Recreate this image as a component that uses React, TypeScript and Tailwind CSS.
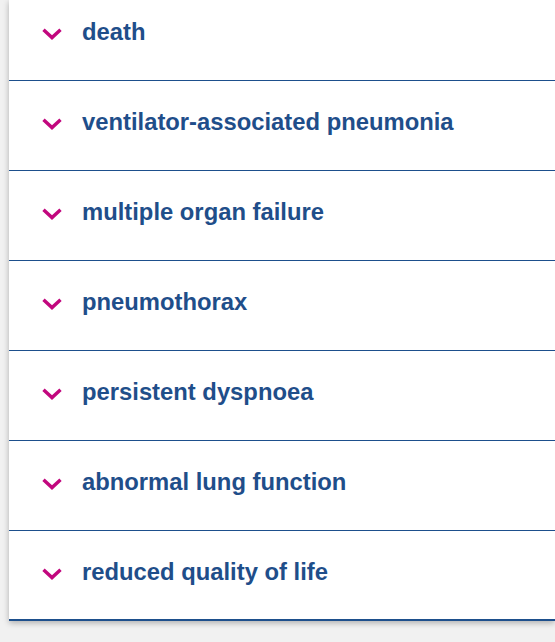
const outcomes = [
  'death',
  'ventilator-associated pneumonia',
  'multiple organ failure',
  'pneumothorax',
  'persistent dyspnoea',
  'abnormal lung function',
  'reduced quality of life',
];

const Chevron = () => (
  <svg width="20" height="12" viewBox="0 0 20 12" className="shrink-0">
    <polyline
      points="1.5,1.8 10,9.6 18.5,1.8"
      fill="none"
      stroke="#c2077e"
      strokeWidth="3.4"
    />
  </svg>
);

export default function App() {
  return (
    <div className="h-[642px] w-[555px] overflow-hidden bg-[#f1f1f1] pl-[9px] font-['Liberation_Sans',Arial,sans-serif]">
      <div className="bg-white shadow-[0_2px_6px_rgba(0,0,0,0.28)]">
        {outcomes.map((o, i) => (
          <div
            key={o}
            className={`flex items-start border-[#1d4f8c] ${
              i === 0 ? 'h-[81px] pt-[18px]' : 'h-[90px] pt-[27px]'
            } ${i === outcomes.length - 1 ? 'border-b-2' : 'border-b'}`}
          >
            <div className="ml-[33px] mt-[10px] w-[40px]">
              <Chevron />
            </div>
            <span className="text-[23.8px] font-bold leading-[28px] text-[#1f4e8a]">
              {o}
            </span>
          </div>
        ))}
      </div>
    </div>
  );
}
